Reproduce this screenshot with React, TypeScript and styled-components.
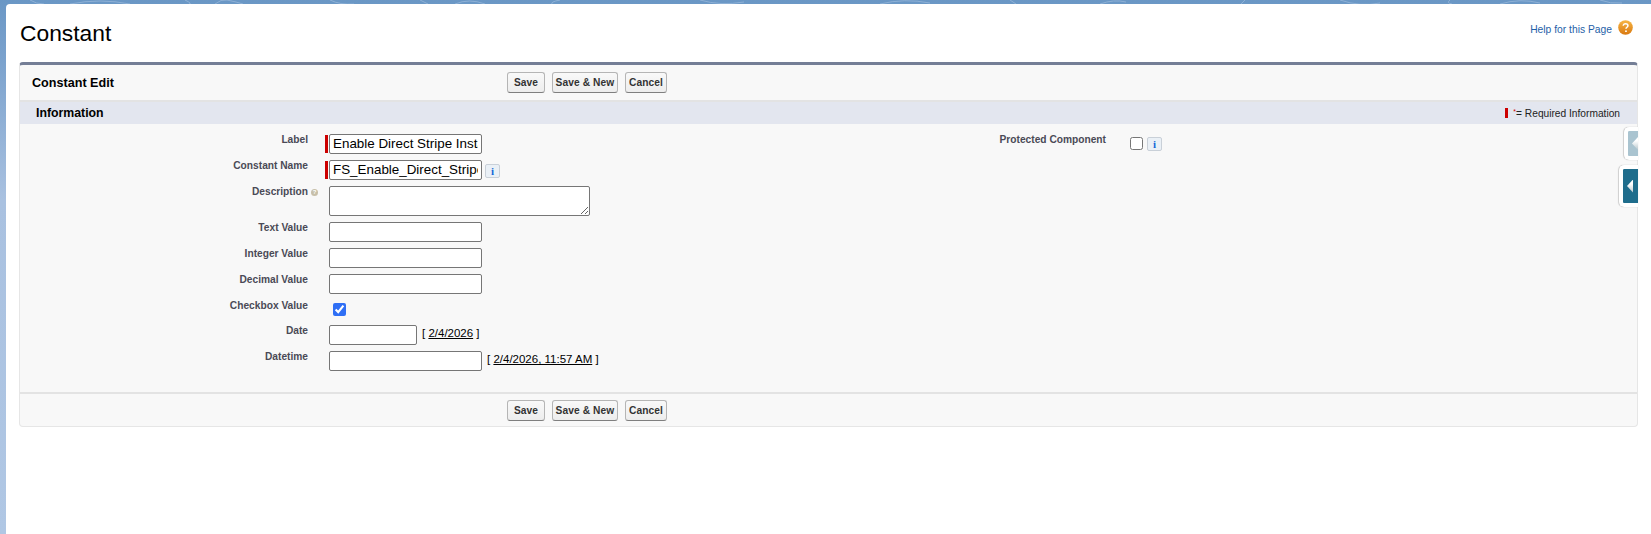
import React from 'react';
import styled, { createGlobalStyle } from 'styled-components';

const GlobalStyle = createGlobalStyle`
    html, body {
        margin: 0;
        padding: 0;
        height: 100%;
        overflow: hidden;
    }
    body {
        font-family: "Liberation Sans", Arial, sans-serif;
        background: linear-gradient(180deg, #6a97c5 0px, #7ba2cd 60px, #a9c1e0 200px, #b0c7e4 100%);
    }
`;

const Shell = styled.div`
    position: relative;
    height: 534px;
    padding: 4px 0 0 6px;
    box-sizing: border-box;
`;

const Swirls = styled.svg`
    position: absolute;
    top: 0;
    left: 0;
`;

const Page = styled.main`
    position: relative;
    height: 530px;
    background: #fff;
    border-radius: 4px 0 0 0;
    padding: 0 13px;
    box-sizing: border-box;
`;

const TitleRow = styled.div`
    display: flex;
    justify-content: space-between;
    height: 58px;
`;

const Title = styled.h1`
    margin: 15px 0 0 1px;
    font-size: 22.8px;
    line-height: 28px;
    font-weight: 400;
    color: #000;
`;

const HelpLink = styled.a`
    display: flex;
    align-items: flex-start;
    gap: 6px;
    margin: 16px 5px 0 0;
    font-size: 10.3px;
    line-height: 20px;
    color: #1f5fa8;
`;

const HelpGlyph = styled.svg`
    flex: none;
`;

const Panel = styled.section`
    background: #f8f8f8;
    border: 1px solid #e6e6e6;
    border-top: 3px solid #747e96;
    border-radius: 4px;
`;

const ButtonBar = styled.div<{ $bottom?: boolean }>`
    display: grid;
    grid-template-columns: 487px auto;
    align-items: center;
    height: ${({ $bottom }) => ($bottom ? '32px' : '35px')};
    border-bottom: ${({ $bottom }) => ($bottom ? '0' : '2px solid #e3e3e3')};
    border-top: ${({ $bottom }) => ($bottom ? '2px solid #e3e3e3' : '0')};
`;

const BarTitle = styled.h2`
    margin: 0 0 0 12px;
    font-size: 12.6px;
    font-weight: 700;
    color: #000;
`;

const Buttons = styled.div`
    display: flex;
    gap: 7px;
`;

const Button = styled.button<{ $width: number }>`
    width: ${({ $width }) => $width}px;
    height: 21px;
    padding: 0;
    font-family: inherit;
    font-size: 10.2px;
    font-weight: 700;
    letter-spacing: 0.1px;
    color: #333;
    background: linear-gradient(180deg, #f9f9f9, #ededed);
    border: 1px solid #b5b5b5;
    border-bottom-color: #7f7f7f;
    border-radius: 3px;
`;

const SectionHeader = styled.div`
    display: flex;
    align-items: center;
    justify-content: space-between;
    height: 22px;
    background: #e3e6ef;
    padding: 0 17px 0 16px;
`;

const SectionTitle = styled.h3`
    margin: 0;
    font-size: 12.3px;
    font-weight: 700;
    color: #000;
`;

const RequiredNote = styled.span`
    display: flex;
    align-items: center;
    font-size: 10.2px;
    color: #222;
`;

const RequiredMark = styled.i`
    width: 3px;
    height: 10px;
    background: #c00;
    margin-right: 5px;
`;

const Star = styled.span`
    color: #c00;
    font-size: 7px;
    margin-top: -3px;
`;

const FormBody = styled.div`
    display: grid;
    grid-template-columns: 809px 1fr;
    height: 268px;
    padding-top: 10px;
    box-sizing: border-box;
`;

const Column = styled.div`
    display: flex;
    flex-direction: column;
`;

const Row = styled.div<{ $height?: number; $labelWidth?: number }>`
    display: grid;
    grid-template-columns: ${({ $labelWidth }) => $labelWidth ?? 288}px 1fr;
    height: ${({ $height }) => $height ?? 26}px;
`;

const Label = styled.label`
    position: relative;
    text-align: right;
    font-size: 10.2px;
    font-weight: 700;
    line-height: 12px;
    color: #4a4a56;
`;

const HelpDot = styled.span`
    position: absolute;
    left: 100%;
    top: 3px;
    margin-left: 3px;
    width: 7px;
    height: 7px;
    border-radius: 50%;
    background: #c7bfa9;
    color: #fff;
    font-size: 6px;
    line-height: 7px;
    text-align: center;
`;

const Field = styled.div`
    position: relative;
    display: flex;
    align-items: flex-start;
    padding-left: 21px;
`;

const RequiredBar = styled.i`
    position: absolute;
    left: 17px;
    top: 1px;
    width: 3px;
    height: 18px;
    background: #c00;
`;

const TextInput = styled.input<{ $width?: number }>`
    box-sizing: border-box;
    width: ${({ $width }) => $width ?? 153}px;
    height: 20px;
    padding: 0 3px 1px;
    font-family: inherit;
    font-size: 13.4px;
    color: #000;
    background: #fff;
    border: 1px solid #767676;
    border-radius: 2px;
    outline: 0;
`;

const TextArea = styled.textarea`
    box-sizing: border-box;
    width: 261px;
    height: 30px;
    margin: 0;
    padding: 2px 3px;
    font-family: inherit;
    font-size: 13px;
    background: #fff;
    border: 1px solid #767676;
    border-radius: 2px;
    outline: 0;
`;

const InfoButton = styled.span<{ $top: number; $left: number }>`
    box-sizing: border-box;
    display: inline-block;
    width: 15px;
    height: 14px;
    margin: ${({ $top }) => $top}px 0 0 ${({ $left }) => $left}px;
    background: #eaf0f6;
    border: 1px solid #c9d0d8;
    border-radius: 2px;
    color: #1468d8;
    font-family: "Liberation Serif", serif;
    font-size: 11px;
    font-weight: 700;
    line-height: 12px;
    text-align: center;
`;

const CheckField = styled.input<{ $left: number }>`
    width: 13px;
    height: 13px;
    margin: 3px 0 0 ${({ $left }) => $left}px;
    accent-color: #2f6ff5;
`;

const DateHint = styled.span`
    margin: 1px 0 0 5px;
    font-size: 11.5px;
    line-height: 14px;
    color: #000;
    white-space: nowrap;
`;

const DateLink = styled.a`
    color: #000;
    text-decoration: underline;
`;

const RightField = styled.div`
    display: flex;
    align-items: flex-start;
`;

const SideTab = styled.div<{ $top: number; $left: number; $height: number; $active?: boolean }>`
    position: absolute;
    top: ${({ $top }) => $top}px;
    left: ${({ $left }) => $left}px;
    right: 13px;
    height: ${({ $height }) => $height}px;
    box-sizing: border-box;
    display: flex;
    align-items: center;
    background: ${({ $active }) => ($active ? '#1f6d8c' : '#aac4d0')};
    border: 4px solid #fff;
    border-right: 0;
    border-radius: 5px 0 0 5px;
    box-shadow: -1px 0 1px rgba(0, 0, 0, 0.15), 0 0 1px rgba(0, 0, 0, 0.2);
`;

const TabArrow = styled.i`
    width: 6px;
    height: 13px;
    margin-left: 4px;
    background: linear-gradient(180deg, #fff 30%, #b8c6cc 100%);
    clip-path: polygon(100% 0, 100% 100%, 0 50%);
`;

const HelpIcon = () => (
    <HelpGlyph width="15" height="15" viewBox="0 0 16 16">
        <defs>
            <linearGradient id="helpFill" x1="0" y1="0" x2="0" y2="1">
                <stop offset="0" stopColor="#f7b645" />
                <stop offset="1" stopColor="#d9780f" />
            </linearGradient>
        </defs>
        <circle cx="8" cy="8" r="7.8" fill="url(#helpFill)" />
        <path
            d="M5.6 6.2c0-1.4 1-2.2 2.5-2.2s2.5.8 2.5 2c0 1.7-2.1 1.7-2.1 3.4"
            fill="none"
            stroke="#fff"
            strokeWidth="1.6"
        />
        <circle cx="8.5" cy="11.9" r="1" fill="#fff" />
    </HelpGlyph>
);

const ActionButtons = () => (
    <Buttons>
        <Button $width={38}>Save</Button>
        <Button $width={66}>Save &amp; New</Button>
        <Button $width={42}>Cancel</Button>
    </Buttons>
);

const App: React.FC = () => (
    <Shell>
        <GlobalStyle />
        {/* faint pattern in the blue strip above the page */}
        <Swirls width="1651" height="4" viewBox="0 0 1651 4" fill="none" stroke="#9dbbdc" strokeWidth="0.7">
            <path d="M30 0q6 4 14 4M70 4q30-6 60 0M185 0q8 4 4 4M215 4q6-5 12-4q10 2 16 4" />
            <path d="M330 0q10 5 24 4M420 0l8 4M455 4q14-6 30 0M560 0q-10 2-8 4M700 0q20 6 44 2" />
            <path d="M880 4q24-6 50-1M1010 0l6 4M1100 4q14-5 26-2M1245 0q-2 2-4 4M1340 0q20 7 40 3" />
            <path d="M1450 0q-4 3 2 4M1500 4q20-6 40-1M1600 0q10 4 22 3" />
        </Swirls>
        <Page>
            <TitleRow>
                <Title>Constant</Title>
                <HelpLink>
                    Help for this Page
                    <HelpIcon />
                </HelpLink>
            </TitleRow>
            <Panel>
                <ButtonBar>
                    <BarTitle>Constant Edit</BarTitle>
                    <ActionButtons />
                </ButtonBar>
                <SectionHeader>
                    <SectionTitle>Information</SectionTitle>
                    <RequiredNote>
                        <RequiredMark />
                        <Star>*</Star>= Required Information
                    </RequiredNote>
                </SectionHeader>
                <FormBody>
                    <Column>
                        <Row>
                            <Label>Label</Label>
                            <Field>
                                <RequiredBar />
                                <TextInput readOnly value="Enable Direct Stripe Instant" />
                            </Field>
                        </Row>
                        <Row>
                            <Label>Constant Name</Label>
                            <Field>
                                <RequiredBar />
                                <TextInput readOnly value="FS_Enable_Direct_Stripe_Instant" />
                                <InfoButton $top={4} $left={3}>i</InfoButton>
                            </Field>
                        </Row>
                        <Row $height={36}>
                            <Label>
                                Description
                                <HelpDot>?</HelpDot>
                            </Label>
                            <Field>
                                <TextArea />
                            </Field>
                        </Row>
                        <Row>
                            <Label>Text Value</Label>
                            <Field>
                                <TextInput />
                            </Field>
                        </Row>
                        <Row>
                            <Label>Integer Value</Label>
                            <Field>
                                <TextInput />
                            </Field>
                        </Row>
                        <Row>
                            <Label>Decimal Value</Label>
                            <Field>
                                <TextInput />
                            </Field>
                        </Row>
                        <Row $height={25}>
                            <Label>Checkbox Value</Label>
                            <Field>
                                <CheckField type="checkbox" readOnly checked $left={4} />
                            </Field>
                        </Row>
                        <Row>
                            <Label>Date</Label>
                            <Field>
                                <TextInput $width={88} />
                                <DateHint>
                                    [ <DateLink>2/4/2026</DateLink> ]
                                </DateHint>
                            </Field>
                        </Row>
                        <Row>
                            <Label>Datetime</Label>
                            <Field>
                                <TextInput />
                                <DateHint>
                                    [ <DateLink>2/4/2026, 11:57 AM</DateLink> ]
                                </DateHint>
                            </Field>
                        </Row>
                    </Column>
                    <Column>
                        <Row $labelWidth={277}>
                            <Label>Protected Component</Label>
                            <RightField>
                                <CheckField type="checkbox" $left={24} />
                                <InfoButton $top={3} $left={4}>i</InfoButton>
                            </RightField>
                        </Row>
                    </Column>
                </FormBody>
                <ButtonBar $bottom>
                    <span />
                    <ActionButtons />
                </ButtonBar>
            </Panel>
            <SideTab $top={123} $left={1618} $height={33}>
                <TabArrow />
            </SideTab>
            <SideTab $top={161} $left={1613} $height={42} $active>
                <TabArrow />
            </SideTab>
        </Page>
    </Shell>
);

export default App;
